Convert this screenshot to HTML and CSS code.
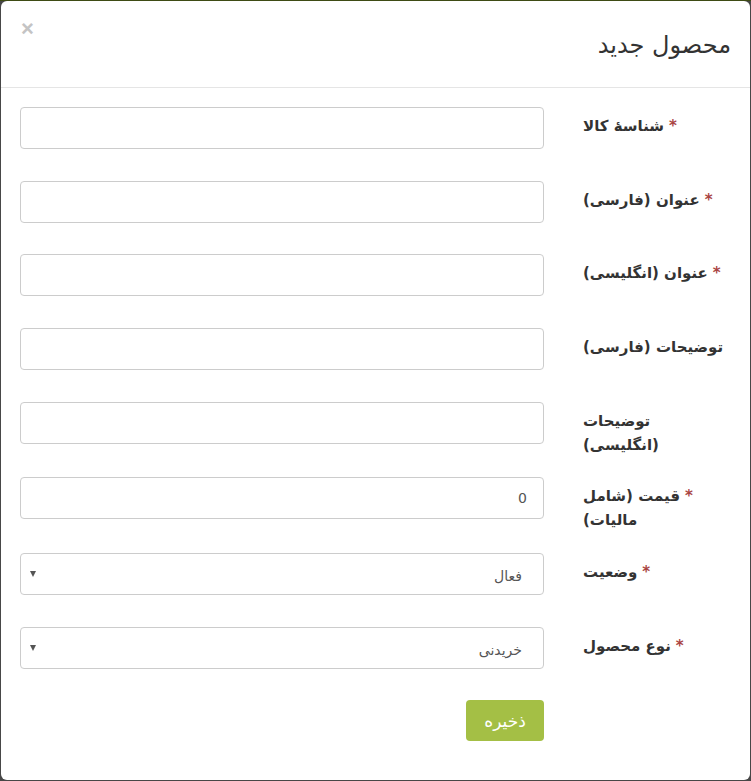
FILE: index.html
```html
<!DOCTYPE html>
<html lang="fa" dir="rtl">
<head>
<meta charset="utf-8">
<title>محصول جدید</title>
<link rel="stylesheet" href="styles.css">
</head>
<body>
<div class="modal">
  <div class="modal-header">
    <h4 class="modal-title">محصول جدید</h4>
    <button class="close" type="button">×</button>
  </div>
  <form class="modal-body">
    <div class="form-row">
      <label class="label"><span class="req">*</span>شناسهٔ کالا</label>
      <div class="control"><input class="input" type="text"></div>
    </div>
    <div class="form-row tight">
      <label class="label"><span class="req">*</span>عنوان (فارسی)</label>
      <div class="control"><input class="input" type="text"></div>
    </div>
    <div class="form-row">
      <label class="label"><span class="req">*</span>عنوان (انگلیسی)</label>
      <div class="control"><input class="input" type="text"></div>
    </div>
    <div class="form-row">
      <label class="label">توضیحات (فارسی)</label>
      <div class="control"><input class="input" type="text"></div>
    </div>
    <div class="form-row loose">
      <label class="label">توضیحات<br>(انگلیسی)</label>
      <div class="control"><input class="input" type="text"></div>
    </div>
    <div class="form-row looser">
      <label class="label"><span class="req">*</span>قیمت (شامل<br>مالیات)</label>
      <div class="control"><input class="input" type="text" value="0"></div>
    </div>
    <div class="form-row">
      <label class="label"><span class="req">*</span>وضعیت</label>
      <div class="control"><div class="select"><span class="select-text">فعال</span><span class="arrow"></span></div></div>
    </div>
    <div class="form-row tight">
      <label class="label"><span class="req">*</span>نوع محصول</label>
      <div class="control"><div class="select"><span class="select-text">خریدنی</span><span class="arrow"></span></div></div>
    </div>
    <div class="form-row actions">
      <div class="label-space"></div>
      <div class="control"><button class="btn-save" type="button">ذخیره</button></div>
    </div>
  </form>
</div>
</body>
</html>
```
FILE: styles.css
```css
html {
  background: linear-gradient(#3e4b14 0, #3e4b14 1px, #474747 1px);
  height: 100%;
}
body {
  margin: 0;
  padding: 1px;
  font-family: Tahoma, "DejaVu Sans", sans-serif;
  color: #333;
}
.modal {
  background: #fff;
  border-radius: 6px;
  height: 779px;
  box-sizing: border-box;
}
.modal-header {
  height: 87px;
  box-sizing: border-box;
  border-bottom: 1px solid #e5e5e5;
  display: flex;
  justify-content: space-between;
  padding: 0 19px 0 20px;
}
.modal-title {
  margin: 0;
  align-self: center;
  font-size: 24px;
  font-weight: normal;
  line-height: 1;
  padding-top: 2px;
}
.close {
  align-self: flex-start;
  margin-top: 17px;
  border: 0;
  background: none;
  padding: 0;
  font-family: "Liberation Sans", sans-serif;
  font-size: 22px;
  font-weight: bold;
  color: #c4c4c4;
  line-height: 1;
}
.modal-body {
  padding: 19px 19px 0 19px;
  display: block;
  margin: 0;
}
.form-row {
  display: flex;
  height: 42px;
  margin-bottom: 32px;
  gap: 39px;
}
.form-row.tight { margin-bottom: 31px; }
.form-row.loose { margin-bottom: 33px; }
.form-row.looser { margin-bottom: 34px; }
.label {
  width: 148px;
  flex: none;
  text-align: left;
  font-size: 15px;
  font-weight: bold;
  line-height: 24px;
  padding-top: 7px;
  color: #333;
}
.label-space {
  width: 148px;
  flex: none;
}
.req {
  color: #a94442;
  margin-left: 5px;
}
.control {
  flex: 1;
}
.input {
  width: 100%;
  height: 42px;
  box-sizing: border-box;
  border: 1px solid #ccc;
  border-radius: 4px;
  padding: 0 16px;
  font-family: "DejaVu Sans", sans-serif;
  font-size: 14px;
  color: #555;
  direction: rtl;
  outline: none;
}
.select {
  height: 42px;
  box-sizing: border-box;
  border: 1px solid #ccc;
  border-radius: 4px;
  padding: 0 21px 0 9px;
  display: flex;
  align-items: center;
  justify-content: space-between;
  font-size: 14px;
  color: #555;
}
.select-text {
  padding-top: 4px;
}
.arrow {
  width: 0;
  height: 0;
  border-left: 3px solid transparent;
  border-right: 3px solid transparent;
  border-top: 6px solid #555;
}
.btn-save {
  width: 78px;
  height: 41px;
  border: 0;
  border-radius: 4px;
  background: #a4bf45;
  color: #fff;
  font-family: Tahoma, "DejaVu Sans", sans-serif;
  font-size: 17px;
  padding: 0;
}
```
